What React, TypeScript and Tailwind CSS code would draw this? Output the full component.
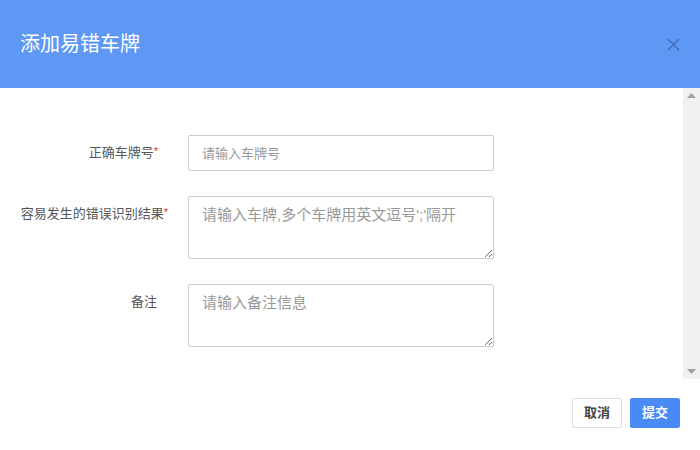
export default function App() {
  const font = { fontFamily: '"Liberation Sans", "Noto Sans CJK SC", sans-serif' };
  return (
    <div className="w-[700px] h-[450px] bg-white flex flex-col overflow-hidden" style={font}>
      {/* 标题栏 */}
      <div className="h-[88px] shrink-0 bg-[#5f98f4] flex items-center justify-between pl-[20px] pr-[20px]">
        <h2 className="text-[20px] text-white font-normal leading-none">添加易错车牌</h2>
        <button className="w-[14px] h-[14px] flex items-center justify-center text-[#3e6cae]">
          <svg width="13" height="13" viewBox="0 0 13 13" fill="none" stroke="currentColor" strokeWidth="1.2">
            <path d="M1 1 L12 12 M12 1 L1 12" />
          </svg>
        </button>
      </div>

      {/* 表单 */}
      <div className="h-[291px] shrink-0 flex">
        <div className="flex-1 overflow-hidden">
          <div className="pt-[47px] flex flex-col gap-[25px]">
            <div className="flex items-center">
              <label className="w-[170px] pr-[12px] text-right text-[13px] text-[#555]">
                正确车牌号<span className="text-[#f5222d] text-[11px] align-top">*</span>
              </label>
              <input
                placeholder="请输入车牌号"
                className="ml-[18px] w-[306px] h-[36px] border border-[#ccc] rounded-[2px] px-[13px] text-[13px] placeholder:text-[#999] outline-none"
              />
            </div>
            <div className="flex items-start">
              <label className="w-[170px] pr-[2px] pt-[8px] text-right text-[13px] text-[#555] whitespace-nowrap">
                容易发生的错误识别结果<span className="text-[#f5222d] text-[11px] align-top">*</span>
              </label>
              <textarea
                placeholder="请输入车牌,多个车牌用英文逗号';'隔开"
                className="ml-[18px] w-[306px] h-[63px] border border-[#ccc] rounded-[2px] px-[13px] py-[7px] text-[15px] placeholder:text-[#999] outline-none"
              />
            </div>
            <div className="flex items-start">
              <label className="w-[170px] pr-[13px] pt-[8px] text-right text-[13px] text-[#555]">备注</label>
              <textarea
                placeholder="请输入备注信息"
                className="ml-[18px] w-[306px] h-[63px] border border-[#ccc] rounded-[2px] px-[13px] py-[7px] text-[15px] placeholder:text-[#999] outline-none"
              />
            </div>
          </div>
        </div>
        {/* 滚动条 */}
        <div className="w-[17px] bg-[#f1f1f1] flex flex-col items-center justify-between py-[5px]">
          <svg width="9" height="5" viewBox="0 0 9 5">
            <path d="M4.5 0 L9 5 L0 5 Z" fill="#a3a3a3" />
          </svg>
          <svg width="9" height="5" viewBox="0 0 9 5">
            <path d="M0 0 L9 0 L4.5 5 Z" fill="#a3a3a3" />
          </svg>
        </div>
      </div>

      {/* 底部按钮 */}
      <div className="flex-1 flex items-center justify-end gap-[8px] pr-[20px] pb-[3px]">
        <button className="w-[50px] h-[30px] border border-[#ddd] rounded-[2px] bg-white text-[13px] font-bold text-[#444]">
          取消
        </button>
        <button className="w-[50px] h-[30px] rounded-[2px] bg-[#4a8af4] text-[13px] font-bold text-white">
          提交
        </button>
      </div>
    </div>
  );
}
